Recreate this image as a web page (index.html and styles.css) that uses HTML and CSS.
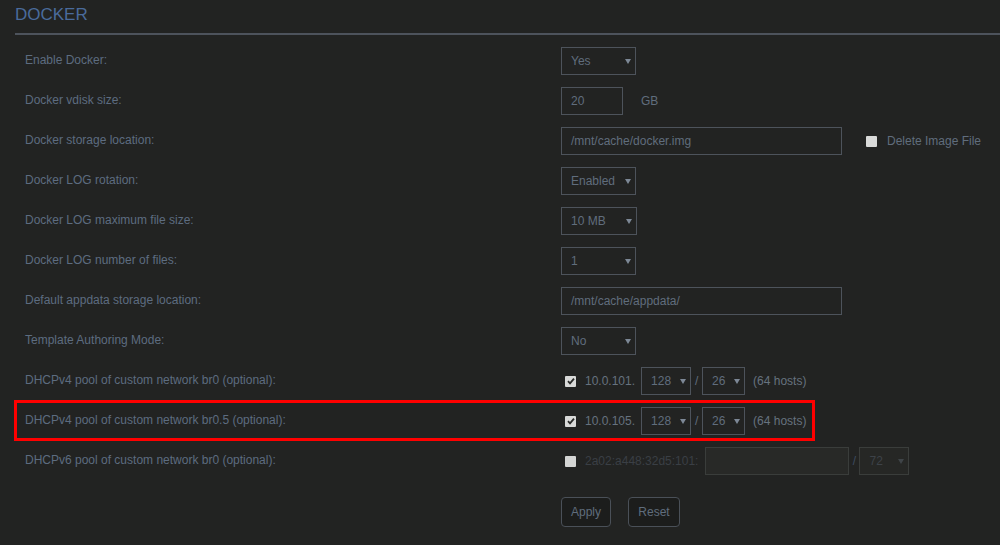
FILE: index.html
```html
<!DOCTYPE html>
<html lang="en">
  <head>
    <meta charset="UTF-8" />
    <title>Docker settings</title>
    <link rel="stylesheet" href="styles.css">
  </head>
  <body>
    <div class="page">
      <h2 class="title">DOCKER</h2>
      <div class="form">
        <div class="row">
          <div class="label">Enable Docker:</div>
          <div class="field">
            <div class="select w75"><span>Yes</span><i class="caret"></i></div>
          </div>
        </div>
        <div class="row">
          <div class="label">Docker vdisk size:</div>
          <div class="field">
            <div class="input w62">20</div>
            <span class="unit">GB</span>
          </div>
        </div>
        <div class="row">
          <div class="label">Docker storage location:</div>
          <div class="field">
            <div class="input w281">/mnt/cache/docker.img</div>
            <span class="check blank delete"></span>
            <span class="note">Delete Image File</span>
          </div>
        </div>
        <div class="row">
          <div class="label">Docker LOG rotation:</div>
          <div class="field">
            <div class="select w75"><span>Enabled</span><i class="caret"></i></div>
          </div>
        </div>
        <div class="row">
          <div class="label">Docker LOG maximum file size:</div>
          <div class="field">
            <div class="select w76"><span>10 MB</span><i class="caret"></i></div>
          </div>
        </div>
        <div class="row">
          <div class="label">Docker LOG number of files:</div>
          <div class="field">
            <div class="select w75"><span>1</span><i class="caret"></i></div>
          </div>
        </div>
        <div class="row">
          <div class="label">Default appdata storage location:</div>
          <div class="field">
            <div class="input w281">/mnt/cache/appdata/</div>
          </div>
        </div>
        <div class="row">
          <div class="label">Template Authoring Mode:</div>
          <div class="field">
            <div class="select w75"><span>No</span><i class="caret"></i></div>
          </div>
        </div>
        <div class="row">
          <div class="label">DHCPv4 pool of custom network br0 (optional):</div>
          <div class="field">
            <span class="check on"><svg width="10" height="10" viewBox="0 0 10 10"><path d="M2 5.2 L4 7.3 L8 2.6" fill="none" stroke="#2a2b2a" stroke-width="1.8"/></svg></span>
            <span class="prefix">10.0.101.</span>
            <div class="select w50"><span>128</span><i class="caret"></i></div>
            <span class="slash">/</span>
            <div class="select w43"><span>26</span><i class="caret"></i></div>
            <span class="hosts">(64 hosts)</span>
          </div>
        </div>
        <div class="row marked">
          <div class="label">DHCPv4 pool of custom network br0.5 (optional):</div>
          <div class="field">
            <span class="check on"><svg width="10" height="10" viewBox="0 0 10 10"><path d="M2 5.2 L4 7.3 L8 2.6" fill="none" stroke="#2a2b2a" stroke-width="1.8"/></svg></span>
            <span class="prefix">10.0.105.</span>
            <div class="select w50"><span>128</span><i class="caret"></i></div>
            <span class="slash">/</span>
            <div class="select w43"><span>26</span><i class="caret"></i></div>
            <span class="hosts">(64 hosts)</span>
          </div>
        </div>
        <div class="row off">
          <div class="label">DHCPv6 pool of custom network br0 (optional):</div>
          <div class="field">
            <span class="check blank"></span>
            <span class="prefix">2a02:a448:32d5:101:</span>
            <div class="input w144"></div>
            <span class="slash">/</span>
            <div class="select w50"><span>72</span><i class="caret"></i></div>
          </div>
        </div>
        <div class="actions">
          <button class="btn apply">Apply</button>
          <button class="btn reset">Reset</button>
        </div>
      </div>
    </div>
  </body>
</html>
```

FILE: styles.css
```css
html, body {
  margin: 0;
  background: #222322;
}
body {
  font-family: "Liberation Sans", Arial, sans-serif;
  font-size: 12px;
  color: #5d6c80;
  width: 1000px;
  height: 545px;
  overflow: hidden;
}
.page {
  padding-left: 15px;
}
.title {
  margin: 0;
  height: 33px;
  line-height: 30px;
  font-size: 17px;
  font-weight: 400;
  color: #4a6b9c;
  border-bottom: 2px solid #4d535c;
}
.form {
  padding-top: 6px;
}
.row {
  display: flex;
  align-items: center;
  height: 40px;
}
.label {
  width: 536px;
  padding-left: 10px;
  padding-bottom: 3px;
}
.field {
  display: flex;
  align-items: center;
}
.select,
.input {
  box-sizing: border-box;
  height: 28px;
  border: 1px solid #4d535b;
  display: flex;
  align-items: center;
  padding-left: 9px;
  color: #606d7d;
}
.select span {
  flex: 1;
}
.caret {
  width: 0;
  height: 0;
  margin-right: 4px;
  border-left: 3px solid transparent;
  border-right: 3px solid transparent;
  border-top: 5px solid #7d8896;
}
.w43 { width: 43px; }
.w50 { width: 50px; }
.w62 { width: 62px; }
.w75 { width: 75px; }
.w76 { width: 76px; }
.w144 { width: 144px; }
.w281 { width: 281px; }
.unit {
  margin-left: 18px;
  color: #606d7d;
}
.check {
  box-sizing: border-box;
  width: 11px;
  height: 11px;
  margin-left: 4px;
  border-radius: 1px;
  background: #d9dad9;
  display: flex;
  align-items: center;
  justify-content: center;
}
.check.delete {
  margin-left: 24px;
}
.note {
  margin-left: 10px;
  color: #606d7d;
}
.prefix {
  margin-left: 9px;
  margin-right: 6px;
  color: #66727f;
}
.slash {
  width: 11px;
  text-align: center;
  color: #606d7d;
}
.hosts {
  margin-left: 8px;
  color: #66727f;
}
.off .prefix {
  margin-right: 7px;
  color: #3a3f45;
}
.off .check {
  background: #d4d5d4;
}
.off .input {
  background: #282927;
  border-color: #3a3d3b;
}
.off .slash {
  width: 10px;
  color: #3e4c60;
}
.off .select {
  background: #262725;
  border-color: #3a3d3b;
  color: #3d4248;
}
.off .caret {
  border-top-color: #3f4448;
}
.marked {
  position: relative;
}
.marked::after {
  content: "";
  position: absolute;
  left: -1px;
  right: 185px;
  top: -1px;
  bottom: 0;
  border: 3px solid #f00;
}
.actions {
  display: flex;
  gap: 17px;
  padding: 16px 0 0 546px;
}
.btn {
  font-family: "Liberation Sans", Arial, sans-serif;
  font-size: 12px;
  color: #606d7d;
  background: #1c1d1c;
  border: 1px solid #4a5058;
  border-radius: 4px;
  height: 30px;
  padding: 0;
}
.apply {
  width: 50px;
}
.reset {
  width: 52px;
}
```
